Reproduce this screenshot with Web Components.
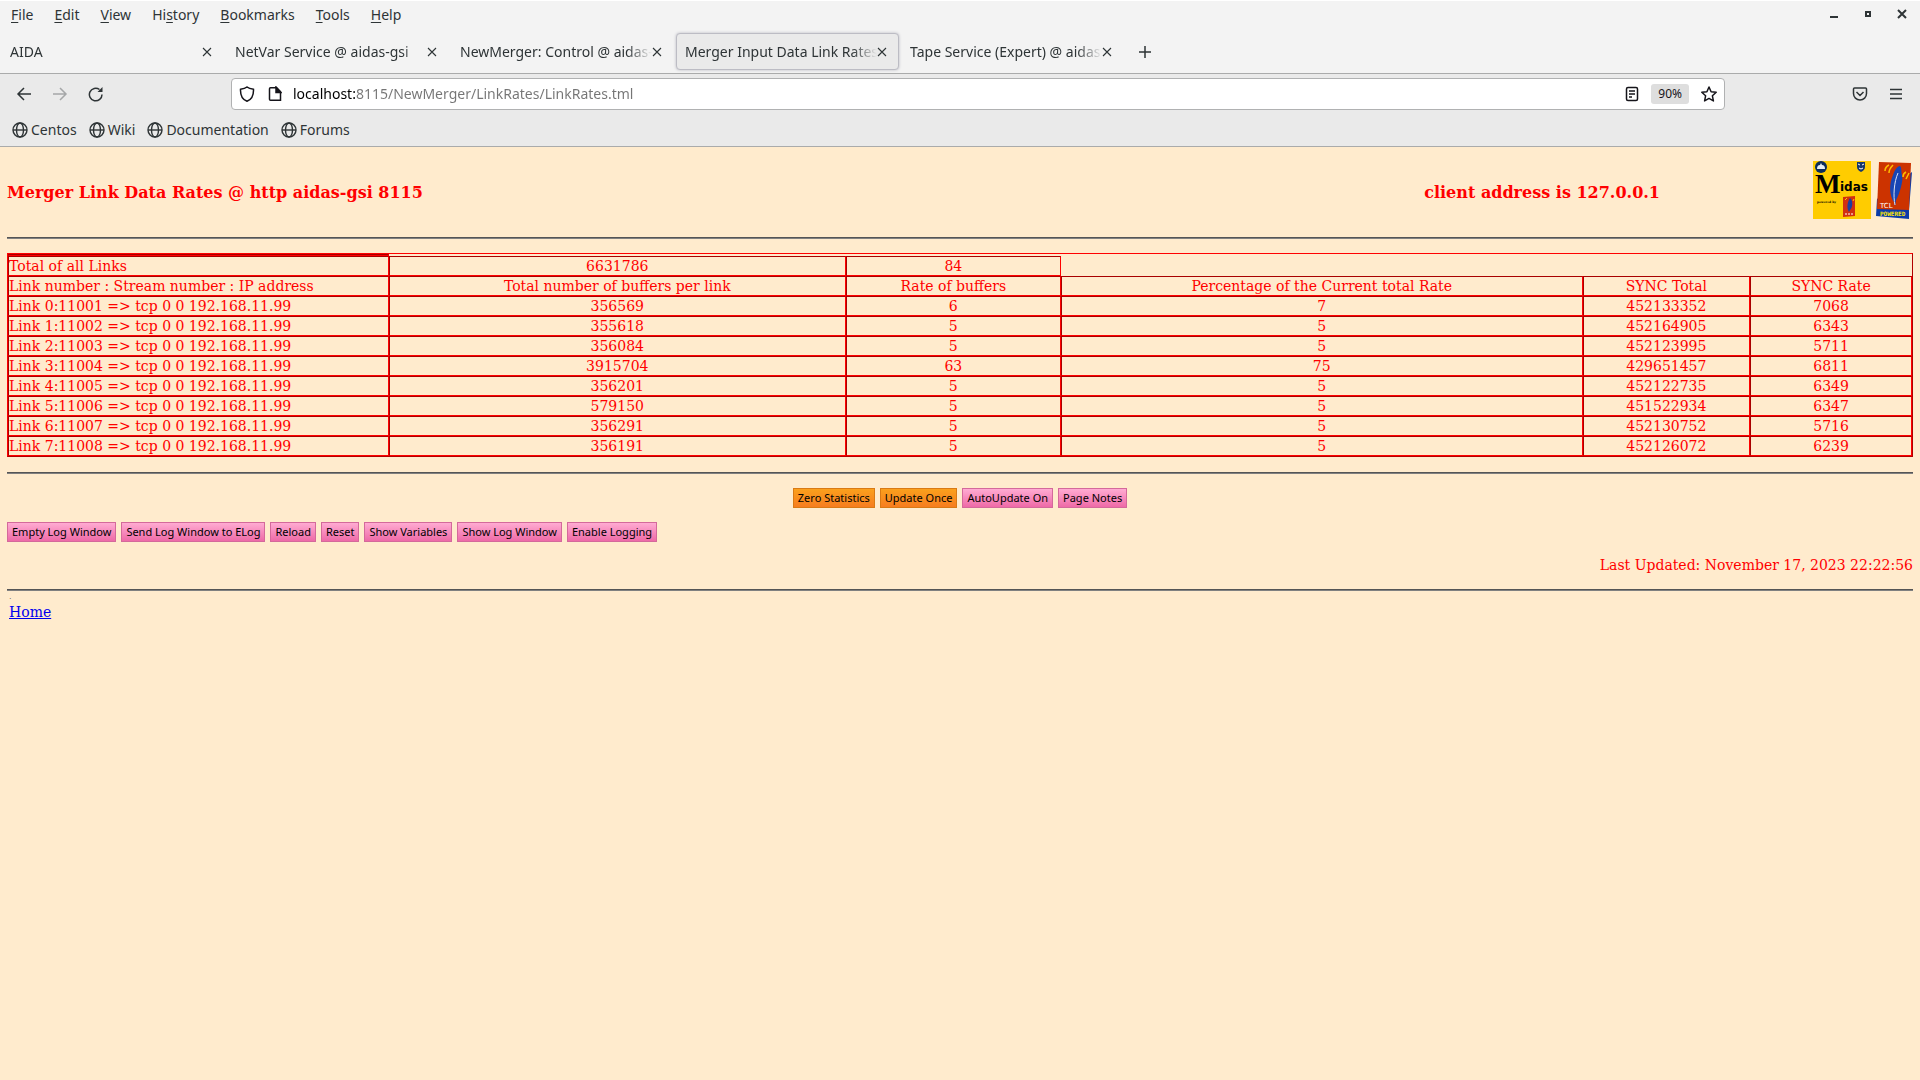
<!DOCTYPE html>
<html lang="en">
<head>
<meta charset="utf-8">
<title>Merger Input Data Link Rates</title>
<style>
  body {
    margin: 0;
    min-height: 100vh;
    background: #ffebcd;
    color: #f00;
    font: 14px/18px "DejaVu Serif", serif;
    --ui-font: "Noto Sans", sans-serif;
    --ui-text: #2e3436;
    --bar-light: #f3f3f3;
    --bar-dark: #eaeaea;
    --bar-line: #aaabab;
  }
</style>
</head>
<body>
<browser-chrome>
  <browser-menu slot="menu"></browser-menu>
  <browser-tab slot="tabs">AIDA</browser-tab>
  <browser-tab slot="tabs">NetVar Service @ aidas-gsi</browser-tab>
  <browser-tab slot="tabs">NewMerger: Control @ aidas-</browser-tab>
  <browser-tab slot="tabs" active>Merger Input Data Link Rates</browser-tab>
  <browser-tab slot="tabs">Tape Service (Expert) @ aidas</browser-tab>
  <browser-location slot="location"></browser-location>
  <bookmark-link slot="bookmarks">Centos</bookmark-link>
  <bookmark-link slot="bookmarks">Wiki</bookmark-link>
  <bookmark-link slot="bookmarks">Documentation</bookmark-link>
  <bookmark-link slot="bookmarks">Forums</bookmark-link>
</browser-chrome>

<merger-page>
  <page-title slot="title">
    Merger Link Data Rates @ http aidas-gsi 8115
    <span slot="client">client address is 127.0.0.1</span>
  </page-title>
  <link-rates slot="rates"></link-rates>
  <action-button slot="controls" kind="update">Zero Statistics</action-button>
  <action-button slot="controls" kind="update">Update Once</action-button>
  <action-button slot="controls">AutoUpdate On</action-button>
  <action-button slot="controls">Page Notes</action-button>
  <action-button slot="log">Empty Log Window</action-button>
  <action-button slot="log">Send Log Window to ELog</action-button>
  <action-button slot="log">Reload</action-button>
  <action-button slot="log">Reset</action-button>
  <action-button slot="log">Show Variables</action-button>
  <action-button slot="log">Show Log Window</action-button>
  <action-button slot="log">Enable Logging</action-button>
  <span slot="updated">Last Updated: November 17, 2023 22:22:56</span>
</merger-page>

<script>
  class BrowserChrome extends HTMLElement {
    constructor() {
      super();
      this.attachShadow({ mode: 'open' }).innerHTML = `
      <style>
        :host {
          display: block;
          font: 14px/20px var(--ui-font);
          color: var(--ui-text);
        }
        .top {
          background: var(--bar-light);
          border-top: 1px solid #fff;
          border-bottom: 1px solid var(--bar-line);
        }
        .tabs {
          display: flex;
          align-items: center;
          box-sizing: border-box;
          height: 44px;
          padding-top: 1px;
        }
        .new-tab {
          display: flex;
          margin-left: 8px;
          padding: 6px;
          border: 0;
          background: none;
        }
        .bottom {
          background: var(--bar-dark);
          border-bottom: 1px solid var(--bar-line);
        }
        .bookmarks {
          display: flex;
          gap: 12px;
          height: 32px;
          align-items: center;
          padding-left: 12px;
        }
      </style>
      <div class="top">
        <slot name="menu"></slot>
        <div class="tabs">
          <slot name="tabs"></slot>
          <button class="new-tab" aria-label="New tab">
            <svg width="12" height="12" stroke="#2e3436" stroke-width="1.5"><path d="M6 0v12M0 6h12"/></svg>
          </button>
        </div>
      </div>
      <div class="bottom">
        <slot name="location"></slot>
        <div class="bookmarks"><slot name="bookmarks"></slot></div>
      </div>
      `;
    }
  }

  class BrowserMenu extends HTMLElement {
    constructor() {
      super();
      this.attachShadow({ mode: 'open' }).innerHTML = `
      <style>
        :host {
          display: flex;
          justify-content: space-between;
          align-items: center;
          height: 28px;
          padding: 0 12px 0 11px;
        }
        nav { display: flex; gap: 21px; }
        .window { display: flex; gap: 22px; }
        button {
          padding: 0;
          border: 0;
          background: none;
          color: inherit;
          font: inherit;
        }
        u { text-underline-offset: 2px; text-decoration-skip-ink: none; }
      </style>
      <nav>
        <button><u>F</u>ile</button>
        <button><u>E</u>dit</button>
        <button><u>V</u>iew</button>
        <button>Hi<u>s</u>tory</button>
        <button><u>B</u>ookmarks</button>
        <button><u>T</u>ools</button>
        <button><u>H</u>elp</button>
      </nav>
      <div class="window">
        <button aria-label="Minimize"><svg width="12" height="12"><path d="M2 8h8v2H2z" fill="#2e3436"/></svg></button>
        <button aria-label="Restore"><svg width="12" height="12" fill="none" stroke="#2e3436" stroke-width="2"><path d="M4 4h4v4H4z"/></svg></button>
        <button aria-label="Close"><svg width="12" height="12" stroke="#2e3436" stroke-width="2"><path d="M2 2l8 8M10 2l-8 8"/></svg></button>
      </div>
      `;
    }
  }

  class BrowserTab extends HTMLElement {
    constructor() {
      super();
      this.attachShadow({ mode: 'open' }).innerHTML = `
      <style>
        :host {
          display: flex;
          align-items: center;
          box-sizing: border-box;
          flex: 0 1 223px;
          min-width: 0;
          height: 37px;
          margin: 0 1px;
          padding: 0 11px 0 8px;
          border: 1px solid transparent;
          border-radius: 4px;
        }
        :host([active]) {
          background: var(--bar-dark);
          border-color: #bcbcc4;
          box-shadow: 0 0 3px #b8b8c0;
        }
        button {
          padding: 0;
          border: 0;
          background: none;
          color: inherit;
          font: inherit;
        }
        .label {
          flex: 1;
          overflow: hidden;
          white-space: nowrap;
          text-align: left;
          mask-image: linear-gradient(to left, transparent, #000 25px);
        }
        .close { display: flex; }
      </style>
      <button class="label"><slot></slot></button>
      <button class="close" aria-label="Close tab">
        <svg width="10" height="10" stroke="#2e3436" stroke-width="1.1"><path d="M1 1l8 8M9 1L1 9"/></svg>
      </button>
      `;
    }
  }

  class BrowserLocation extends HTMLElement {
    constructor() {
      super();
      this.attachShadow({ mode: 'open' }).innerHTML = `
      <style>
        :host {
          display: flex;
          justify-content: space-between;
          align-items: center;
          height: 40px;
          padding: 0 16px;
        }
        .nav, .side { display: flex; gap: 20px; flex: none; }
        .nav { width: 215px; }
        .side { justify-content: flex-end; width: 179px; }
        button {
          display: flex;
          padding: 0;
          border: 0;
          background: none;
          color: inherit;
        }
        button:disabled { color: #a5a7a8; }
        svg { fill: none; stroke: currentColor; stroke-width: 1.5; }
        .field {
          display: flex;
          flex: 1;
          align-items: center;
          box-sizing: border-box;
          height: 32px;
          padding: 0 7px;
          border: 1px solid #b0b1b2;
          border-radius: 4px;
          background: #fff;
          color: #15141a;
        }
        .page { margin: 0 11px 0 13px; }
        /* the host name is black, the rest of the address grey */
        input {
          flex: 1;
          min-width: 0;
          padding: 0;
          border: 0;
          outline: 0;
          font: 14px/20px var(--ui-font);
          color: transparent;
          background: linear-gradient(to right, #000 62px, #757575 62px);
          background-clip: text;
          -webkit-background-clip: text;
        }
        .zoom {
          margin: 0 12px;
          padding: 0 7px;
          border-radius: 3px;
          background: #dedede;
          font: 12px/20px var(--ui-font);
        }
      </style>
      <div class="nav">
        <button aria-label="Back"><svg width="16" height="16"><path d="M15 8H2M8 2L2 8l6 6"/></svg></button>
        <button aria-label="Forward" disabled><svg width="16" height="16"><path d="M1 8h13M8 2l6 6-6 6"/></svg></button>
        <button aria-label="Reload"><svg width="16" height="16"><path d="M14 8.500A6.300 6.300 0 1 1 11.500 3.500"/><path d="M14.500 1v5h-5z" fill="currentColor" stroke="none"/></svg></button>
      </div>
      <div class="field">
        <svg width="16" height="16"><path d="M8 1C6.500 2.300 4 3 1.500 3.300 1.300 9 3.500 13.500 8 15.200 12.500 13.500 14.700 9 14.500 3.300 12 3 9.500 2.300 8 1z"/></svg>
        <svg class="page" width="14" height="16"><path d="M2.500 1.800h6l4 4v8.400h-10q-1 0-1-1V2.800q0-1 1-1z"/><path d="M8 1v5.500h5z" fill="currentColor"/></svg>
        <input type="text" aria-label="Address" value="localhost:8115/NewMerger/LinkRates/LinkRates.tml">
        <button aria-label="Reader view"><svg width="14" height="16"><rect x="1.500" y="1.500" width="11" height="13" rx="1.500"/><path d="M4 5h6M4 8h6M4 11h3"/></svg></button>
        <button class="zoom">90%</button>
        <button aria-label="Bookmark this page"><svg width="16" height="16" stroke-linejoin="round"><path d="M8 1l2.100 4.700 5.100.6-3.800 3.500 1 5.100L8 12.400l-4.400 2.500 1-5.100L.8 6.300l5.100-.6z"/></svg></button>
      </div>
      <div class="side">
        <button aria-label="Save to Pocket"><svg width="16" height="16"><path d="M2.500 2h11q1 0 1 1v4.500a6.500 6.500 0 0 1-13 0V3q0-1 1-1zM4.500 6L8 9.500 11.500 6"/></svg></button>
        <button aria-label="Application menu"><svg width="16" height="16"><path d="M2 3.500h12M2 8h12M2 12.500h12"/></svg></button>
      </div>
      `;
    }
  }

  class BookmarkLink extends HTMLElement {
    constructor() {
      super();
      this.attachShadow({ mode: 'open' }).innerHTML = `
      <style>
        :host { display: block; }
        a {
          display: flex;
          align-items: center;
          gap: 3px;
          color: inherit;
          text-decoration: none;
        }
      </style>
      <a href="#">
        <svg width="16" height="16" fill="none" stroke="#2e3436" stroke-width="1.4">
          <circle cx="8" cy="8" r="7"/><ellipse cx="8" cy="8" rx="3.500" ry="7"/><path d="M1 8h14"/>
        </svg>
        <slot></slot>
      </a>
      `;
    }
  }

  class MergerPage extends HTMLElement {
    constructor() {
      super();
      this.attachShadow({ mode: 'open' }).innerHTML = `
      <style>
        :host { display: block; padding: 0 7px; }
        hr {
          margin: 15px 0 14px;
          border: 0;
          border-top: 1px solid #555;
          border-bottom: 1px solid #808080;
        }
        .controls, .log { display: flex; flex-wrap: wrap; gap: 5px; }
        .controls { justify-content: center; margin-bottom: 14px; }
        .updated { margin-top: 14px; text-align: right; }
        footer { margin-top: -14px; padding-left: 2px; }
        .dot { font-size: 8px; line-height: 12px; color: #555; }
        a { color: #00e; }
      </style>
      <slot name="title"></slot>
      <hr>
      <slot name="rates"></slot>
      <hr>
      <div class="controls"><slot name="controls"></slot></div>
      <div class="log"><slot name="log"></slot></div>
      <div class="updated"><slot name="updated"></slot></div>
      <hr>
      <footer>
        <div class="dot">.</div>
        <a href="#">Home</a>
      </footer>
      `;
    }
  }

  class PageTitle extends HTMLElement {
    constructor() {
      super();
      this.attachShadow({ mode: 'open' }).innerHTML = `
      <style>
        :host {
          display: grid;
          grid-template-columns: 7fr 3fr auto;
          align-items: center;
          padding: 14px 0 3px;
        }
        h1, h2 { margin: 0; padding-top: 6px; font-size: 16px; line-height: 20px; }
        h2 { text-align: center; }
        .logos { display: flex; gap: 5px; }
        a { display: flex; }
      </style>
      <h1><slot></slot></h1>
      <h2><slot name="client"></slot></h2>
      <div class="logos">
        <a href="#" aria-label="Midas">
          <svg width="58" height="58">
            <path d="M0 0h58v58H0z" fill="#fc0"/>
            <circle cx="8" cy="6" r="6" fill="#0b2c5c"/>
            <path d="M4 8q0-4 3-4l1-2 1 2q3 0 3 4z" fill="#e8eef4"/>
            <path d="M44 1h8v5q0 3-4 5-4-2-4-5z" fill="#16386c"/>
            <path d="M45 3l2 1M51 3l-2 1M46 7l2 1 2-1" stroke="#fff" fill="none"/>
            <text x="2" y="32" font-family="Liberation Serif, serif" font-weight="bold" font-size="27" fill="#000">M</text>
            <text x="27" y="30" font-family="DejaVu Sans, sans-serif" font-weight="bold" font-size="12" fill="#000">idas</text>
            <text x="4" y="42" font-family="DejaVu Serif, serif" font-weight="bold" font-size="3" fill="#000">powered by</text>
            <path d="M30 36l12-1v20l-12 1z" fill="#d22f10"/>
            <path d="M36 51c-3-5-1-11 1-14 3 2 3 9 0 12z" fill="#1b3fa0"/>
            <path d="M32 39l2-2M40 40l1-2" stroke="#fc0"/>
            <path d="M32 53h9" stroke="#fff" stroke-dasharray="2 1"/>
          </svg>
        </a>
        <a href="#" aria-label="Tcl powered">
          <svg width="37" height="58">
            <path d="M1 38L36 11l-3 38v9L0 55z" fill="#0b3ba8"/>
            <path d="M3 1l32 1-2 47-32-1z" fill="#cc3300"/>
            <path d="M18 41c-5-7-5-18-1-27 2-6 5-9 7-9 2 2 1 6 2 9s0 8-1 12-3 10-5 13l-1 6z" fill="#1745b4"/>
            <path d="M19 44c-2-9-1-23 3-32" fill="none" stroke="#dbe2f2"/>
            <path d="M9 10c0-3 2-5 4-6M13 12c0-4 2-6 4-8M27 16c0-3 1-4 3-5M30 18l3-6" fill="none" stroke="#fb0" stroke-width="1.5"/>
            <text x="4" y="47" font-family="DejaVu Sans, sans-serif" font-size="7" fill="#fff">TCL</text>
            <text x="4" y="55" font-family="DejaVu Sans Mono, monospace" font-weight="bold" font-size="6" fill="#ffe800">POWERED</text>
          </svg>
        </a>
      </div>
      `;
    }
  }

  const HEADINGS = [
    'Link number : Stream number : IP address',
    'Total number of buffers per link',
    'Rate of buffers',
    'Percentage of the Current total Rate',
    'SYNC Total',
    'SYNC Rate'
  ];

  const LINKS = [
    [356569, 6, 7, 452133352, 7068],
    [355618, 5, 5, 452164905, 6343],
    [356084, 5, 5, 452123995, 5711],
    [3915704, 63, 75, 429651457, 6811],
    [356201, 5, 5, 452122735, 6349],
    [579150, 5, 5, 451522934, 6347],
    [356291, 5, 5, 452130752, 5716],
    [356191, 5, 5, 452126072, 6239]
  ];

  class LinkRates extends HTMLElement {
    constructor() {
      super();
      this.attachShadow({ mode: 'open' }).innerHTML = `
      <style>
        :host { display: block; }
        table {
          width: 100%;
          table-layout: fixed;
          border-spacing: 0;
          border: 1px solid;
          border-color: #f00 #b00000 #b00000 #f00;
        }
        th, td {
          padding: 0;
          border: 1px solid;
          border-color: #a80000 #f00 #f00 #a80000;
          font-weight: normal;
          text-align: center;
        }
        th:first-child, td:first-child { text-align: left; }
      </style>
      <table>
        <colgroup>
          <col style="width:20%">
          <col style="width:24%">
          <col style="width:11.3%">
          <col style="width:27.4%">
          <col style="width:8.8%">
          <col style="width:8.5%">
        </colgroup>
        <tbody>
          <tr><td></td></tr>
          <tr><td>Total of all Links</td><td>6631786</td><td>84</td></tr>
          <tr>${HEADINGS.map(text => `<th>${text}</th>`).join('')}</tr>
          ${LINKS.map((link, i) => `
          <tr>
            <td>Link ${i}:${11001 + i} =&gt; tcp 0 0 192.168.11.99</td>
            ${link.map(value => `<td>${value}</td>`).join('')}
          </tr>`).join('')}
        </tbody>
      </table>
      `;
    }
  }

  class ActionButton extends HTMLElement {
    constructor() {
      super();
      this.attachShadow({ mode: 'open' }).innerHTML = `
      <style>
        :host {
          display: block;
          --from: #ffabd2;
          --to: #ee6aa7;
          --edge: #d4699b;
        }
        :host([kind=update]) {
          --from: #fba01c;
          --to: #f67d20;
          --edge: #d97a14;
        }
        button {
          display: block;
          padding: 0 4px;
          border: 1px solid var(--edge);
          background: linear-gradient(var(--from), var(--to));
          color: #000;
          font: 11px/18px var(--ui-font);
        }
      </style>
      <button><slot></slot></button>
      `;
    }
  }

  customElements.define('browser-chrome', BrowserChrome);
  customElements.define('browser-menu', BrowserMenu);
  customElements.define('browser-tab', BrowserTab);
  customElements.define('browser-location', BrowserLocation);
  customElements.define('bookmark-link', BookmarkLink);
  customElements.define('merger-page', MergerPage);
  customElements.define('page-title', PageTitle);
  customElements.define('link-rates', LinkRates);
  customElements.define('action-button', ActionButton);
</script>
</body>
</html>
